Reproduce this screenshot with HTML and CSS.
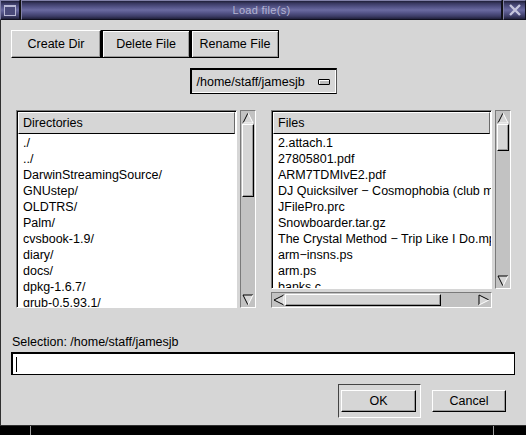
FILE: index.html
```html
<!DOCTYPE html>
<html>
<head>
<meta charset="utf-8">
<link rel="stylesheet" href="styles.css">
<title>Load file(s)</title>
</head>
<body>
<div class="win">
  <div class="titlebar">
    <div class="tb-btn tb-menu"><span class="sq"></span></div>
    <div class="tb-title">Load file(s)</div>
    <div class="tb-btn tb-close">
      <svg width="14" height="14" viewBox="0 0 14 14"><path d="M2 2 L12 12 M12 2 L2 12" stroke="#c4c4dc" stroke-width="2.4" fill="none"/></svg>
    </div>
  </div>
  <div class="body">
    <div class="toolbar">
      <div class="btn raised w90">Create Dir</div>
      <div class="btn framed w89">Delete File</div>
      <div class="btn framed w89">Rename File</div>
    </div>
    <div class="pathrow">
      <div class="combo"><span>/home/staff/jamesjb</span><span class="ind"></span></div>
    </div>
    <div class="panes">
      <div class="pane dirs">
        <div class="listframe tall">
          <div class="colhead">Directories</div>
          <div class="items">
            <div class="row">./</div>
            <div class="row">../</div>
            <div class="row">DarwinStreamingSource/</div>
            <div class="row">GNUstep/</div>
            <div class="row">OLDTRS/</div>
            <div class="row">Palm/</div>
            <div class="row">cvsbook-1.9/</div>
            <div class="row">diary/</div>
            <div class="row">docs/</div>
            <div class="row">dpkg-1.6.7/</div>
            <div class="row">grub-0.5.93.1/</div>
          </div>
        </div>
        <div class="vscroll tall">
          <div class="arrow up"><svg width="12" height="12" viewBox="0 0 12 12"><polygon points="6,1 11,11 1,11" fill="#d6d6d6"/><path d="M1 11 L6 1" stroke="#000" fill="none"/><path d="M6 1 L11 11 L1 11" stroke="#fff" fill="none"/></svg></div>
          <div class="track"><div class="thumb" style="height:73px"></div></div>
          <div class="arrow down"><svg width="12" height="12" viewBox="0 0 12 12"><polygon points="1,1 11,1 6,11" fill="#d6d6d6"/><path d="M1 1 L11 1 M1 1 L6 11" stroke="#000" fill="none"/><path d="M11 1 L6 11" stroke="#fff" fill="none"/></svg></div>
        </div>
      </div>
      <div class="pane files">
        <div class="listframe short">
          <div class="colhead">Files</div>
          <div class="items">
            <div class="row">2.attach.1</div>
            <div class="row">27805801.pdf</div>
            <div class="row">ARM7TDMIvE2.pdf</div>
            <div class="row">DJ Quicksilver − Cosmophobia (club mix).mp3</div>
            <div class="row">JFilePro.prc</div>
            <div class="row">Snowboarder.tar.gz</div>
            <div class="row">The Crystal Method − Trip Like I Do.mp3</div>
            <div class="row">arm−insns.ps</div>
            <div class="row">arm.ps</div>
            <div class="row">banks.c</div>
          </div>
        </div>
        <div class="vscroll short">
          <div class="arrow up"><svg width="12" height="12" viewBox="0 0 12 12"><polygon points="6,1 11,11 1,11" fill="#d6d6d6"/><path d="M1 11 L6 1" stroke="#000" fill="none"/><path d="M6 1 L11 11 L1 11" stroke="#fff" fill="none"/></svg></div>
          <div class="track"><div class="thumb" style="height:27px"></div></div>
          <div class="arrow down"><svg width="12" height="12" viewBox="0 0 12 12"><polygon points="1,1 11,1 6,11" fill="#d6d6d6"/><path d="M1 1 L11 1 M1 1 L6 11" stroke="#000" fill="none"/><path d="M11 1 L6 11" stroke="#fff" fill="none"/></svg></div>
        </div>
        <div class="hscroll">
          <div class="arrow left"><svg width="12" height="12" viewBox="0 0 12 12"><polygon points="1,6 11,1 11,11" fill="#d6d6d6"/><path d="M11 1 L1 6 L11 11" stroke="#000" fill="none"/><path d="M11 1 L11 11" stroke="#fff" fill="none"/></svg></div>
          <div class="htrack"><div class="hthumb" style="width:156px"></div></div>
          <div class="arrow right"><svg width="12" height="12" viewBox="0 0 12 12"><polygon points="1,1 11,6 1,11" fill="#d6d6d6"/><path d="M1 11 L1 1 L11 6" stroke="#000" fill="none"/><path d="M11 6 L1 11" stroke="#fff" fill="none"/></svg></div>
        </div>
        <div class="corner"></div>
      </div>
    </div>
    <div class="sel-label">Selection: /home/staff/jamesjb</div>
    <div class="entry"><span class="caret"></span></div>
    <div class="actions">
      <div class="default-frame"><div class="btn raised ok">OK</div></div>
      <div class="btn raised cancel">Cancel</div>
    </div>
  </div>
  <div class="bottom">
    <span class="tick t1"></span>
    <span class="tick t2"></span>
  </div>
</div>
</body>
</html>
```

FILE: styles.css
```css
* { box-sizing: border-box; }
html, body { margin: 0; padding: 0; background: #000; }
body {
  font-family: "Liberation Sans", Arial, Helvetica, sans-serif;
  font-size: 12.5px;
  color: #000;
}
.win {
  width: 526px;
  height: 435px;
  display: flex;
  flex-direction: column;
  background: #000;
  overflow: hidden;
}

/* title bar */
.titlebar {
  height: 20px;
  display: flex;
  background: #111;
}
.tb-btn, .tb-title {
  background: linear-gradient(to bottom, #20203a 0, #3c3c66 15%, #56568a 35%, #6a6aa0 50%, #56568a 65%, #3c3c66 85%, #20203a 100%);
  border-top: 1px solid #8080a8;
  border-left: 1px solid #8080a8;
  border-right: 1px solid #101020;
  border-bottom: 1px solid #101020;
}
.tb-menu {
  width: 20px;
  display: flex;
  align-items: center;
  justify-content: center;
}
.tb-menu .sq {
  width: 12px;
  height: 11px;
  border: 1px solid #b8b8d4;
  border-top-width: 2px;
  background: #4a4a7a;
}
.tb-title {
  flex: 1;
  margin: 0 1px;
  text-align: center;
  color: #b4b4d2;
  font-size: 11px;
  line-height: 18px;
  letter-spacing: 0.3px;
}
.tb-close {
  width: 23px;
  display: flex;
  align-items: center;
  justify-content: center;
}

/* body */
.body {
  height: 406px;
  background: #d6d6d6;
  box-shadow: inset 1px 0 0 #303030, inset 0 -1px 0 #303030;
  display: flex;
  flex-direction: column;
}

.btn {
  display: flex;
  align-items: center;
  justify-content: center;
  background: #d6d6d6;
  white-space: nowrap;
}
.raised {
  border-top: 1px solid #fff;
  border-left: 1px solid #fff;
  border-right: 1px solid #000;
  border-bottom: 1px solid #000;
  box-shadow: inset -1px -1px 0 #9a9a9a;
}
.framed {
  border: 1px solid #000;
  border-left-width: 2px;
  box-shadow: inset 1px 1px 0 #fff, inset -1px -1px 0 #9a9a9a;
}

.toolbar {
  display: flex;
  margin: 10px 0 0 11px;
  height: 28px;
}
.w90 { width: 90px; }
.w89 { width: 89px; }

.pathrow {
  margin-top: 10px;
  height: 26px;
  display: flex;
  justify-content: center;
}
.combo {
  width: 147px;
  height: 26px;
  border-top: 2px solid #000;
  border-left: 2px solid #000;
  border-right: 1px solid #555;
  border-bottom: 1px solid #000;
  box-shadow: inset -1px -1px 0 #fff;
  display: flex;
  align-items: center;
  padding-left: 5px;
}
.combo .ind {
  width: 12px;
  height: 6px;
  border: 1px solid #000;
  border-radius: 1px;
  background: #bdbdbd;
  margin-left: 13px;
  margin-top: 1px;
  box-shadow: inset 1px 1px 0 #fff;
}

/* panes */
.panes {
  margin-top: 16px;
  height: 199px;
  display: flex;
  padding-left: 16px;
  gap: 15px;
}
.pane {
  display: grid;
  grid-template-columns: 221px 16px;
  column-gap: 3px;
  row-gap: 3px;
  align-content: start;
}
.pane.dirs { grid-template-rows: 198px; }
.pane.files { grid-template-rows: 179px 16px; }

.listframe {
  border-top: 1px solid #7a7a7a;
  border-left: 1px solid #7a7a7a;
  border-right: 1px solid #fff;
  border-bottom: 1px solid #fff;
  background: #fff;
  overflow: hidden;
  display: flex;
  flex-direction: column;
  box-shadow: inset 1px 1px 0 #000;
}
.colhead {
  margin: 1px 1px 0 1px;
  height: 22px;
  flex: none;
  background: #d6d6d6;
  border-top: 1px solid #fff;
  border-left: 1px solid #fff;
  border-right: 1px solid #6a6a6a;
  border-bottom: 1px solid #000;
  padding: 1px 0 0 4px;
  line-height: 19px;
}
.items {
  padding: 1px 0 0 6px;
  overflow: hidden;
}
.row {
  height: 16px;
  line-height: 16px;
  white-space: nowrap;
}

/* scrollbars */
.vscroll {
  background: #c2c2c2;
  border-top: 1px solid #7a7a7a;
  border-left: 1px solid #7a7a7a;
  border-right: 1px solid #fff;
  border-bottom: 1px solid #fff;
  display: flex;
  flex-direction: column;
  padding: 1px;
}
.arrow {
  width: 12px;
  height: 12px;
  flex: none;
  display: flex;
}
.track { flex: 1; }
.thumb {
  width: 12px;
  background: #d6d6d6;
  border-top: 1px solid #fff;
  border-left: 1px solid #fff;
  border-right: 1px solid #000;
  border-bottom: 1px solid #000;
  box-shadow: inset -1px -1px 0 #9a9a9a;
}
.hscroll {
  background: #c2c2c2;
  border-top: 1px solid #7a7a7a;
  border-left: 1px solid #7a7a7a;
  border-right: 1px solid #fff;
  border-bottom: 1px solid #fff;
  display: flex;
  padding: 1px;
}
.htrack { flex: 1; display: flex; }
.hthumb {
  height: 12px;
  background: #d6d6d6;
  border-top: 1px solid #fff;
  border-left: 1px solid #fff;
  border-right: 1px solid #000;
  border-bottom: 1px solid #000;
  box-shadow: inset -1px -1px 0 #9a9a9a;
}

/* selection */
.sel-label {
  margin: 26px 0 0 12px;
  height: 14px;
  line-height: 14px;
}
.entry {
  margin: 3px 11px 0 11px;
  height: 23px;
  background: #fff;
  border: 1px solid #000;
  border-left-width: 2px;
  border-top-width: 2px;
  display: flex;
  align-items: center;
  padding-left: 3px;
}
.caret {
  width: 1px;
  height: 15px;
  background: #000;
}

.actions {
  margin-top: 9px;
  height: 34px;
  display: flex;
  justify-content: flex-end;
  align-items: center;
  padding-right: 20px;
  gap: 11px;
}
.default-frame {
  width: 83px;
  height: 34px;
  border-top: 1px solid #444;
  border-left: 1px solid #444;
  border-right: 1px solid #fff;
  border-bottom: 1px solid #fff;
  padding: 5px 0 0 2px;
}
.ok { width: 75px; height: 22px; }
.cancel { width: 74px; height: 22px; }

.bottom {
  flex: 1;
  background: #000;
  display: flex;
}
.tick {
  width: 1px;
  height: 100%;
  background: #a0a0a0;
}
.t1 { margin-left: 30px; }
.t2 { margin-left: 462px; }
```
